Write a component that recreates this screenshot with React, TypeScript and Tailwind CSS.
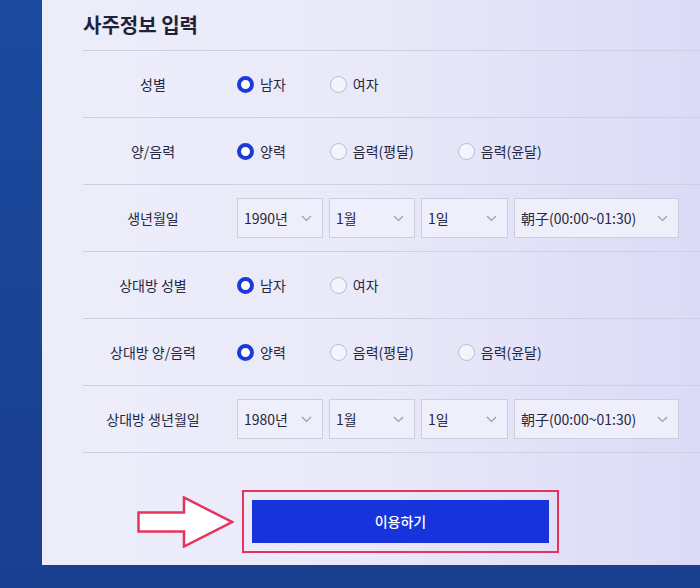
import React from "react";

const font = { fontFamily: '"Noto Sans CJK KR", "Noto Sans", sans-serif' };

function Radio({ checked, label }: { checked?: boolean; label: string }) {
  return (
    <div className="flex items-center gap-[6px]">
      {checked ? (
        <span className="w-[17px] h-[17px] rounded-full border-[4px] border-[#1b3ad8] bg-white" />
      ) : (
        <span className="w-[17px] h-[17px] rounded-full border border-[#b9b9d2] bg-[#f4f4fc]" />
      )}
      <span className="text-[14px] text-[#25283f]">{label}</span>
    </div>
  );
}

function Select({ w, text }: { w: string; text: string }) {
  return (
    <div className={`${w} h-[40px] border border-[#cdcde0] bg-[#efeffb] flex items-center justify-between pl-[6px] pr-[10px]`}>
      <span className="text-[14px] text-[#25283f]">{text}</span>
      <svg width="11" height="7" viewBox="0 0 11 7" fill="none">
        <path d="M1 1l4.5 4.5L10 1" stroke="#9a9ab8" strokeWidth="1.2" />
      </svg>
    </div>
  );
}

function Row({ label, children }: { label: string; children: React.ReactNode }) {
  return (
    <div className="h-[67px] border-b border-[#cfcfe2] flex items-center">
      <div className="w-[140px] text-center text-[14px] text-[#25283f]">{label}</div>
      <div className="ml-[14px] flex items-center">{children}</div>
    </div>
  );
}

function Selects({ year }: { year: string }) {
  return (
    <div className="flex items-center gap-[6px]">
      <Select w="w-[86px]" text={year} />
      <Select w="w-[86px]" text="1월" />
      <Select w="w-[87px]" text="1일" />
      <Select w="w-[165px]" text="朝子(00:00~01:30)" />
    </div>
  );
}

export default function App() {
  return (
    <div style={font} className="w-[700px] h-[588px] overflow-hidden bg-gradient-to-b from-[#1a4196] to-[#1a3f8e] flex">
      <div className="w-[42px] shrink-0 bg-gradient-to-b from-[#1a4a9e] to-[#1a3f90]" />
      <div className="flex-1 h-[565px] bg-gradient-to-r from-[#ededfa] via-[#e9e9f9] to-[#dcdaf6] pl-[41px]">
        <div className="h-[51px] border-b border-[#cfcfe2] flex items-center">
          <h1 className="text-[20px] font-bold text-[#202338]">사주정보 입력</h1>
        </div>
        <Row label="성별">
          <div className="flex items-center gap-[44px]">
            <Radio checked label="남자" />
            <Radio label="여자" />
          </div>
        </Row>
        <Row label="양/음력">
          <div className="flex items-center gap-[44px]">
            <Radio checked label="양력" />
            <Radio label="음력(평달)" />
            <Radio label="음력(윤달)" />
          </div>
        </Row>
        <Row label="생년월일">
          <Selects year="1990년" />
        </Row>
        <Row label="상대방 성별">
          <div className="flex items-center gap-[44px]">
            <Radio checked label="남자" />
            <Radio label="여자" />
          </div>
        </Row>
        <Row label="상대방 양/음력">
          <div className="flex items-center gap-[44px]">
            <Radio checked label="양력" />
            <Radio label="음력(평달)" />
            <Radio label="음력(윤달)" />
          </div>
        </Row>
        <Row label="상대방 생년월일">
          <Selects year="1980년" />
        </Row>
        <div className="mt-[37px] flex items-center">
          <svg className="ml-[54px]" width="97" height="52" viewBox="0 0 97 52">
            <path
              d="M1.5 16.5H47V1.5L95 26L47 50.5V35.5H1.5Z"
              fill="#ffffff"
              stroke="#e6335e"
              strokeWidth="2.5"
              strokeLinejoin="miter"
            />
          </svg>
          <div className="ml-[8px] w-[317px] h-[63px] border-[2px] border-[#e6335e] p-[8px]">
            <button className="w-full h-full bg-[#1733dc] text-white text-[14px] font-medium flex items-center justify-center">
              이용하기
            </button>
          </div>
        </div>
      </div>
    </div>
  );
}
